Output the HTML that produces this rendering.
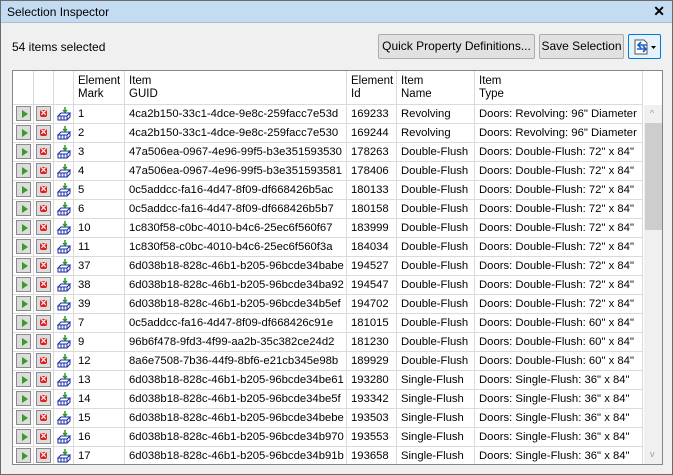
<!DOCTYPE html>
<html><head><style>
*{box-sizing:border-box;margin:0;padding:0}
body{width:673px;height:475px;background:#f0f0f0;font-family:"Liberation Sans",sans-serif;font-size:12px;color:#000;position:relative;overflow:hidden}
.win{position:absolute;left:0;top:0;width:673px;height:475px;border:1px solid #6b6b6b}
.title{position:absolute;left:0;top:0;width:671px;height:22px;background:#c3dcf2;border-bottom:1px solid #a9c1d8;padding:4px 6px;font-size:12px}
.x{position:absolute;right:7px;top:2px;font-size:14px;font-weight:bold}
.cnt{position:absolute;left:11px;top:39px}
.btn{position:absolute;top:33px;height:25px;border:1px solid #adadad;background:#e1e1e1;border-radius:2px;text-align:center;line-height:23px}
.tbl{position:absolute;left:11px;top:69px;width:651px;height:395px;border:1px solid #828790;background:#fff;overflow:hidden}
table{border-collapse:collapse;position:absolute;left:-1px;top:-1px;width:631px;table-layout:fixed}
td{border:1px solid #dadada;height:19px;padding:0 4px;white-space:nowrap;font-size:11.3px;line-height:17px;overflow:hidden}
th{border:1px solid #dadada;height:34px;padding:0 4px;text-align:left;font-weight:normal;background:#fff;vertical-align:middle;line-height:13px;font-size:11.5px}
td.ic{padding:0;text-align:center}
.b{display:inline-block;width:15px;height:15px;border:1px solid #8a8a8a;background:#ddd;vertical-align:middle;position:relative}
.g:after{content:"";position:absolute;left:5px;top:3px;border-left:6px solid #3a9a2a;border-top:4px solid transparent;border-bottom:4px solid transparent}
.r:after{content:"";position:absolute;left:3px;top:3px;width:7px;height:7px;background:#e02020;border-radius:2px}
.r:before{content:"×";position:absolute;left:0;top:0;width:13px;line-height:13px;text-align:center;color:#fff;font-size:10px;font-weight:bold;z-index:1}
.sb{position:absolute;left:631px;top:34px;width:19px;height:359px;background:#f0f0f0}
.th{position:absolute;left:1px;top:18px;width:17px;height:107px;background:#cdcdcd}
svg{vertical-align:middle}
</style></head><body>
<div class="win">
<div class="title">Selection Inspector<span class="x">✕</span></div>
<div class="cnt">54 items selected</div>
<div class="btn" style="left:377px;width:157px">Quick Property Definitions...</div>
<div class="btn" style="left:538px;width:85px">Save Selection</div>
<div class="btn" style="left:627px;width:33px;border-color:#0078d7;background:#e5f1fb"><svg width="26" height="20" viewBox="0 0 26 20"><path d="M3 3h9l3 3v11H3z" fill="#fff" stroke="#555"/><path d="M5 12h9M11 9l3 3-3 3M15 8H6M9 5L6 8l3 3" stroke="#1a5fc8" stroke-width="1.6" fill="none"/><path d="M19 9h5l-2.5 3z" fill="#000"/></svg></div>
<div class="tbl">
<table>
<tr><th style="width:21px"></th><th style="width:20px"></th><th style="width:20px"></th><th style="width:51px">Element<br>Mark</th><th style="width:222px">Item<br>GUID</th><th style="width:50px">Element<br>Id</th><th style="width:78px">Item<br>Name</th><th>Item<br>Type</th></tr>
</table>
<div class="sb"><div style="position:absolute;top:3px;left:6px;font-size:9px;color:#999">^</div><div class="th"></div><div style="position:absolute;top:344px;left:6px;font-size:9px;color:#999">v</div></div>
</div>
</div>
<script>
var R=[["1","4ca2b150-33c1-4dce-9e8c-259facc7e53d","169233","Revolving","Doors: Revolving: 96\" Diameter"],
["2","4ca2b150-33c1-4dce-9e8c-259facc7e530","169244","Revolving","Doors: Revolving: 96\" Diameter"],
["3","47a506ea-0967-4e96-99f5-b3e351593530","178263","Double-Flush","Doors: Double-Flush: 72\" x 84\""],
["4","47a506ea-0967-4e96-99f5-b3e351593581","178406","Double-Flush","Doors: Double-Flush: 72\" x 84\""],
["5","0c5addcc-fa16-4d47-8f09-df668426b5ac","180133","Double-Flush","Doors: Double-Flush: 72\" x 84\""],
["6","0c5addcc-fa16-4d47-8f09-df668426b5b7","180158","Double-Flush","Doors: Double-Flush: 72\" x 84\""],
["10","1c830f58-c0bc-4010-b4c6-25ec6f560f67","183999","Double-Flush","Doors: Double-Flush: 72\" x 84\""],
["11","1c830f58-c0bc-4010-b4c6-25ec6f560f3a","184034","Double-Flush","Doors: Double-Flush: 72\" x 84\""],
["37","6d038b18-828c-46b1-b205-96bcde34babe","194527","Double-Flush","Doors: Double-Flush: 72\" x 84\""],
["38","6d038b18-828c-46b1-b205-96bcde34ba92","194547","Double-Flush","Doors: Double-Flush: 72\" x 84\""],
["39","6d038b18-828c-46b1-b205-96bcde34b5ef","194702","Double-Flush","Doors: Double-Flush: 72\" x 84\""],
["7","0c5addcc-fa16-4d47-8f09-df668426c91e","181015","Double-Flush","Doors: Double-Flush: 60\" x 84\""],
["9","96b6f478-9fd3-4f99-aa2b-35c382ce24d2","181230","Double-Flush","Doors: Double-Flush: 60\" x 84\""],
["12","8a6e7508-7b36-44f9-8bf6-e21cb345e98b","189929","Double-Flush","Doors: Double-Flush: 60\" x 84\""],
["13","6d038b18-828c-46b1-b205-96bcde34be61","193280","Single-Flush","Doors: Single-Flush: 36\" x 84\""],
["14","6d038b18-828c-46b1-b205-96bcde34be5f","193342","Single-Flush","Doors: Single-Flush: 36\" x 84\""],
["15","6d038b18-828c-46b1-b205-96bcde34bebe","193503","Single-Flush","Doors: Single-Flush: 36\" x 84\""],
["16","6d038b18-828c-46b1-b205-96bcde34b970","193553","Single-Flush","Doors: Single-Flush: 36\" x 84\""],
["17","6d038b18-828c-46b1-b205-96bcde34b91b","193658","Single-Flush","Doors: Single-Flush: 36\" x 84\""]];
var ic='<svg width="16" height="16" viewBox="0 0 16 16"><path d="M9 1v5M7 4l2 2 2-2" stroke="#2a9a2a" stroke-width="1.5" fill="none"/><path d="M2 10l3-3h9l-3 3zM2 10v4h9v-4M11 14l3-3V7" stroke="#1a2aa0" fill="none"/><path d="M5 10v4M8 10v4" stroke="#1a2aa0"/></svg>';
var h='';R.forEach(function(r){h+='<tr style="height:19px"><td class="ic"><span class="b g"></span></td><td class="ic"><span class="b r"></span></td><td class="ic">'+ic+'</td><td>'+r.join('</td><td>')+'</td></tr>';});
document.querySelector('table').insertAdjacentHTML('beforeend',h);
</script>
</body></html>
